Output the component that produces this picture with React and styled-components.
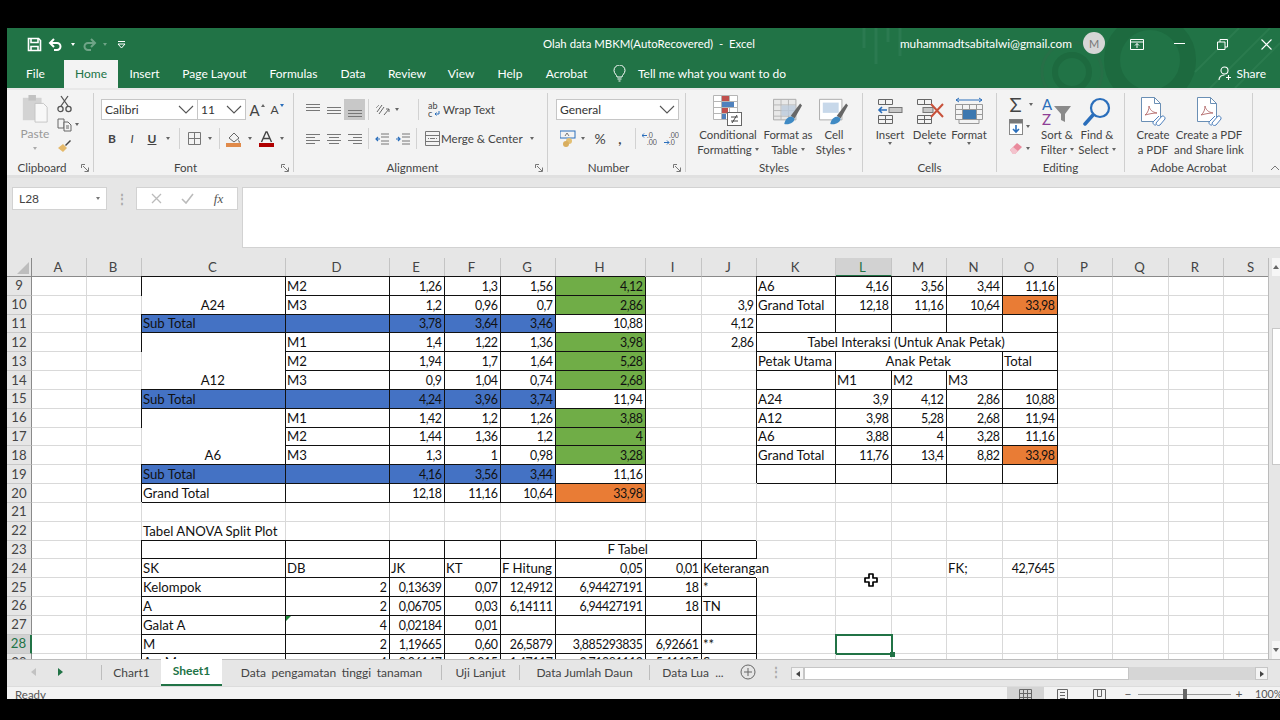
import React from 'react';
import styled, { createGlobalStyle } from 'styled-components';

const GREEN = '#217346';
const UI = 'Lato, "Open Sans", sans-serif';
const SHEET = 'Lato, "Liberation Sans", sans-serif';

const Global = createGlobalStyle`
  html, body { margin: 0; padding: 0; background: #000; overflow: hidden; }
  * { box-sizing: border-box; }
`;

const Frame = styled.div`
  width: 1280px;
  height: 720px;
  padding: 28px 0 21px 7px;
  background: #000;
`;
const Win = styled.div`
  height: 671px;
  display: flex;
  flex-direction: column;
  overflow: hidden;
  font-family: ${UI};
  color: #444;
  background: #e6e6e6;
`;

/* title + tabs */
const Head = styled.div`
  position: relative;
  height: 60px;
  flex: none;
  background: ${GREEN};
  color: #fff;
  overflow: hidden;
`;
const HeadArt = styled.svg`
  position: absolute;
  right: 0;
  top: 0;
`;
const TitleBar = styled.div`
  position: relative;
  height: 32px;
  display: flex;
  align-items: center;
`;
const Qat = styled.div`
  width: 536px;
  flex: none;
  display: flex;
  align-items: center;
  padding-left: 18px;
`;
const QatBtn = styled.span`
  width: ${p => p.$w}px;
  display: flex;
  justify-content: center;
  align-items: center;
  opacity: ${p => (p.$dim ? 0.35 : 1)};
`;
const DocTitle = styled.div`
  flex: 1;
  font-size: 11.4px;
  margin-top: -2px;
  white-space: pre;
`;
const Email = styled.div`
  font-size: 11.8px;
  margin-top: -2px;
  white-space: nowrap;
`;
const Avatar = styled.div`
  width: 22px;
  height: 22px;
  margin: -2px 10px 0 11px;
  border-radius: 50%;
  background: #d6d6d6;
  color: #777;
  font-size: 11px;
  display: flex;
  align-items: center;
  justify-content: center;
`;
const WinBtn = styled.div`
  width: ${p => p.$w || 43}px;
  height: 32px;
  display: flex;
  align-items: center;
  justify-content: center;
  padding-left: ${p => p.$pl || 0}px;
`;
const TabRow = styled.div`
  position: relative;
  height: 28px;
  display: flex;
  align-items: stretch;
`;
const RibbonTab = styled.div`
  width: ${p => p.$w}px;
  display: flex;
  align-items: center;
  justify-content: center;
  font-size: 12px;
  padding-bottom: 1px;
  white-space: nowrap;
  color: ${p => (p.$on ? GREEN : '#fff')};
  background: ${p => (p.$on ? '#f3f3f3' : 'transparent')};
`;
const TellMe = styled.div`
  display: flex;
  align-items: center;
  font-size: 12px;
  gap: 12px;
  margin-left: 15px;
  padding-bottom: 1px;
  white-space: nowrap;
`;
const Share = styled.div`
  margin-left: auto;
  padding: 0 14px 1px 0;
  display: flex;
  align-items: center;
  gap: 4px;
  font-size: 12px;
`;

/* ribbon */
const Ribbon = styled.div`
  height: 87px;
  flex: none;
  display: flex;
  background: #f3f3f3;
  border-top: 2px solid #e8e8e8;
`;
const Group = styled.div`
  width: ${p => p.$w}px;
  flex: none;
  margin: 3px 0 3px;
  display: flex;
  flex-direction: column;
  border-right: 1px solid #cfcfcf;
`;
const GroupBody = styled.div`
  flex: 1;
  display: flex;
  padding-left: ${p => p.$pl || 0}px;
  min-height: 0;
`;
const GroupFoot = styled.div`
  height: 13px;
  margin-bottom: -2px;
  display: flex;
  align-items: center;
`;
const GroupLabel = styled.div`
  flex: 1;
  text-align: center;
  font-size: 11.6px;
  line-height: 13px;
  color: #444;
`;
const Launcher = styled.svg`
  width: 8px;
  height: 8px;
  margin: 0 4px;
  flex: none;
`;
const PasteStack = styled.div`
  display: flex;
  flex-direction: column;
  align-items: center;
  width: 50px;
  margin-left: 3px;
  flex: none;
`;
const ClipTools = styled.div`
  display: flex;
  flex-direction: column;
  align-items: flex-start;
  margin-left: -3px;
  flex: none;
`;
const EditTools = styled.div`
  display: flex;
  flex-direction: column;
  align-items: center;
  width: 36px;
  flex: none;
`;
const PasteText = styled.div`
  font-size: 12px;
  color: #999;
  line-height: 14px;
  margin-top: 2px;
`;
const MiniIcon = styled.div`
  height: ${p => p.$h || 21}px;
  display: flex;
  align-items: center;
  gap: 3px;
  justify-content: center;
`;
const Rows = styled.div`
  display: flex;
  flex-direction: column;
  padding-top: 6px;
`;
const ToolRow = styled.div`
  height: 21px;
  display: flex;
  align-items: center;
  margin-bottom: 8px;
`;
const SelectBox = styled.div`
  width: ${p => p.$w}px;
  height: 21px;
  flex: none;
  background: #fff;
  border: 1px solid #c6c6c6;
  margin-left: -1px;
  display: flex;
  align-items: center;
  justify-content: space-between;
  padding: 0 3px 0 3px;
  font-size: 12px;
  color: #333;
`;
const Btn = styled.div`
  width: ${p => p.$w || 21}px;
  height: ${p => p.$h || 21}px;
  flex: none;
  display: flex;
  align-items: center;
  justify-content: center;
  margin-left: ${p => p.$ml || 0}px;
  background: ${p => (p.$on ? '#c8c8c8' : 'transparent')};
  font-size: ${p => p.$fs || 12}px;
  font-weight: ${p => (p.$bold ? 700 : 400)};
  font-style: ${p => (p.$it ? 'italic' : 'normal')};
  text-decoration: ${p => (p.$un ? 'underline' : 'none')};
  color: #444;
`;
const Caret = styled.i`
  width: 0;
  height: 0;
  display: inline-block;
  border-left: 2.5px solid transparent;
  border-right: 2.5px solid transparent;
  border-top: 3px solid ${p => p.$c || '#666'};
`;
const SizeMark = styled.i`
  width: 0;
  height: 0;
  margin: -8px 0 0 1px;
  border-left: 2px solid transparent;
  border-right: 2px solid transparent;
  ${p => (p.$up ? 'border-bottom: 3px solid #666;' : 'border-top: 3px solid #2a6ebb;')}
`;
const Sep = styled.div`
  width: 1px;
  height: 21px;
  flex: none;
  background: #d2d2d2;
  margin-left: ${p => p.$l}px;
  margin-right: ${p => p.$r}px;
`;
const ToolText = styled.div`
  font-size: 11.6px;
  white-space: nowrap;
  color: #444;
  width: ${p => (p.$w ? `${p.$w}px` : 'auto')};
`;
const Large = styled.div`
  width: ${p => p.$w}px;
  flex: none;
  display: flex;
  flex-direction: column;
  align-items: center;
  padding-top: 2px;
`;
const LargeIcon = styled.div`
  height: 32px;
  display: flex;
  align-items: center;
  justify-content: center;
`;
const LargeLine = styled.div`
  font-size: 11.4px;
  line-height: 15px;
  white-space: nowrap;
  color: #444;
  display: flex;
  align-items: center;
  gap: 3px;
`;
const Collapse = styled.svg`
  align-self: flex-end;
  margin: 0 0 4px 17px;
  flex: none;
`;

/* formula bar */
const FormulaBar = styled.div`
  height: 83px;
  flex: none;
  display: flex;
  align-items: flex-start;
  padding: 9px 0 0 5px;
  background: #e6e6e6;
  border-top: 3px solid #e0e0e0;
`;
const NameBox = styled.div`
  width: 95px;
  height: 23px;
  background: #fff;
  border: 1px solid #d2d2d2;
  display: flex;
  align-items: center;
  justify-content: space-between;
  padding: 0 6px 0 6px;
  font-size: 12px;
  color: #444;
`;
const Grip = styled.div`
  width: ${p => p.$w}px;
  height: 23px;
  flex: none;
  display: flex;
  align-items: center;
  justify-content: center;
  color: #aaa;
  font-size: 12px;
  font-weight: 700;
`;
const FxBox = styled.div`
  width: 102px;
  height: 23px;
  background: #fff;
  border: 1px solid #d2d2d2;
  display: flex;
  align-items: center;
  justify-content: space-around;
  padding: 0 4px;
`;
const FxMark = styled.span`
  font-family: "Liberation Serif", serif;
  font-style: italic;
  font-size: 13px;
  color: #555;
`;
const Input = styled.div`
  flex: 1;
  height: 61px;
  margin-left: 4px;
  background: #fff;
  border: 1px solid #d2d2d2;
  border-right: 0;
`;

/* sheet */
const SheetArea = styled.div`
  height: 401px;
  flex: none;
  display: flex;
  background: #fff;
`;
const Grid = styled.div`
  flex: 1;
  height: 401px;
  overflow: hidden;
  display: grid;
  grid-template-columns: 25px ${p => p.$cols};
  grid-template-rows: 19px repeat(21, 18.84px);
  font-family: ${SHEET};
  font-size: 13.2px;
  color: #111;
`;
const Corner = styled.div`
  background: #e6e6e6;
  border-bottom: 1px solid #8a8a8a;
  border-right: 1px solid #8a8a8a;
  display: flex;
  align-items: flex-end;
  justify-content: flex-end;
  padding: 0 2px 2px 0;
`;
const CornerMark = styled.i`
  width: 0;
  height: 0;
  border-left: 12px solid transparent;
  border-bottom: 12px solid #bdbdbd;
`;
const ColHead = styled.div`
  display: flex;
  align-items: center;
  justify-content: center;
  padding-right: 2px;
  background: ${p => (p.$on ? '#d2d2d2' : '#e6e6e6')};
  color: ${p => (p.$on ? GREEN : '#444')};
  border-right: 1px solid #c4c4c4;
  border-bottom: ${p => (p.$on ? `2px solid ${GREEN}` : '1px solid #8a8a8a')};
`;
const RowHead = styled.div`
  display: flex;
  align-items: center;
  justify-content: center;
  padding-bottom: 1px;
  background: ${p => (p.$on ? '#d2d2d2' : '#e6e6e6')};
  color: ${p => (p.$on ? GREEN : '#444')};
  border-right: ${p => (p.$on ? `2px solid ${GREEN}` : '1px solid #8a8a8a')};
  border-bottom: 1px solid #c8c8c8;
`;
const fills = { blue: '#4472c4', green: '#70ad47', orange: '#e97c35' };
const boxShadow = p => {
  if (p.$open) return 'box-shadow: -1px -1px 0 #111;';
  if (p.$box) return 'box-shadow: inset -1px -1px 0 #111, -1px -1px 0 #111;';
  return 'box-shadow: inset -1px -1px 0 #d9d9d9;';
};
const Cell = styled.div`
  position: relative;
  grid-column: span ${p => p.$cs || 1};
  grid-row: span ${p => p.$rs || 1};
  display: flex;
  align-items: flex-end;
  justify-content: ${p => p.$al};
  padding: 0 3.5px 1px 1px;
  line-height: 17px;
  white-space: nowrap;
  font-size: ${p => (p.$num ? '12.4px' : 'inherit')};
  letter-spacing: ${p => (p.$num ? '-0.45px' : 'normal')};
  background: ${p => (p.$fill ? fills[p.$fill] : 'transparent')};
  ${boxShadow}
  ${p => p.$flag && `
    &::before {
      content: '';
      position: absolute;
      left: 0;
      top: 0;
      border-top: 5px solid #1f8a3a;
      border-right: 5px solid transparent;
    }
  `}
  ${p => p.$sel && `
    &::after {
      content: '';
      position: absolute;
      inset: -1px;
      border: 2px solid ${GREEN};
    }
    &::before {
      content: '';
      position: absolute;
      right: -3px;
      bottom: -3px;
      width: 5px;
      height: 5px;
      background: ${GREEN};
      z-index: 1;
    }
  `}
`;
const Pointer = styled.svg`
  position: absolute;
  left: 28px;
  top: -5px;
`;
const VScroll = styled.div`
  width: 12px;
  flex: none;
  background: #e6e6e6;
  border-left: 1px solid #bbb;
  display: flex;
  flex-direction: column;
  padding-left: 3px;
`;
const VArrow = styled.div`
  height: 18px;
  flex: none;
  background: #f6f6f6;
  margin-bottom: ${p => p.$mb || 0}px;
  margin-top: ${p => p.$mt || 0}px;
  display: flex;
  align-items: center;
  justify-content: center;
`;
const VThumb = styled.div`
  height: 137px;
  background: #fff;
  border: 1px solid #c8c8c8;
  border-right: 0;
  flex: none;
`;
const UpMark = styled.i`
  width: 0;
  height: 0;
  border-left: 3px solid transparent;
  border-right: 3px solid transparent;
  border-${p => (p.$up ? 'bottom' : 'top')}: 4px solid #666;
`;

/* sheet tabs */
const TabBar = styled.div`
  height: 27px;
  flex: none;
  display: flex;
  align-items: stretch;
  background: #e6e6e6;
  border-top: 1px solid #bcbcbc;
  font-size: 12px;
`;
const TabNav = styled.div`
  width: 94px;
  flex: none;
  display: flex;
  align-items: center;
  padding: 0 0 2px 24px;
  gap: 22px;
`;
const NavArrow = styled.i`
  width: 0;
  height: 0;
  border-top: 4px solid transparent;
  border-bottom: 4px solid transparent;
  border-${p => (p.$left ? 'right' : 'left')}: 5px solid ${p => (p.$dim ? '#c2c2c2' : '#217346')};
`;
const SheetTab = styled.div`
  width: ${p => p.$w}px;
  flex: none;
  display: flex;
  align-items: center;
  justify-content: center;
  padding-bottom: 2px;
  white-space: nowrap;
  word-spacing: ${p => p.$ws || 0}px;
  margin-top: ${p => (p.$on ? -1 : 0)}px;
  background: ${p => (p.$on ? '#fff' : 'transparent')};
  color: ${p => (p.$on ? GREEN : '#444')};
  font-weight: ${p => (p.$on ? 700 : 400)};
  border-bottom: ${p => (p.$on ? `2px solid ${GREEN}` : '0')};
`;
const TabLine = styled.div`
  width: 1px;
  flex: none;
  margin: 5px 0 6px;
  background: #bdbdbd;
`;
const AddSheet = styled.div`
  width: 24px;
  flex: none;
  display: flex;
  align-items: center;
  justify-content: center;
  padding-bottom: 2px;
`;
const HScroll = styled.div`
  width: 477px;
  height: 13px;
  margin: 7px 0 0;
  flex: none;
  display: flex;
  align-items: stretch;
  background: #d6d6d6;
`;
const HArrow = styled.div`
  width: 13px;
  flex: none;
  background: #f4f4f4;
  border: 1px solid #c6c6c6;
  display: flex;
  align-items: center;
  justify-content: center;
`;
const HThumb = styled.div`
  width: 325px;
  flex: none;
  background: #fff;
  border: 1px solid #c6c6c6;
`;
const HRest = styled.div`
  flex: 1;
`;
const HMark = styled.i`
  width: 0;
  height: 0;
  border-top: 3.5px solid transparent;
  border-bottom: 3.5px solid transparent;
  border-${p => (p.$left ? 'right' : 'left')}: 4px solid #444;
`;

/* status */
const Status = styled.div`
  flex: 1;
  min-height: 0;
  overflow: hidden;
  background: #f3f3f3;
  border-top: 1px solid #dcdcdc;
  display: flex;
  align-items: flex-start;
  font-size: 11.5px;
  color: #555;
`;
const Ready = styled.div`
  margin: 1px auto 0 8px;
  line-height: 14px;
`;
const ViewBtn = styled.div`
  width: 37px;
  height: 14px;
  flex: none;
  padding-top: 2px;
  display: flex;
  justify-content: center;
  background: ${p => (p.$on ? '#d4d4d4' : 'transparent')};
`;
const Zoomer = styled.div`
  width: ${p => p.$w}px;
  flex: none;
  text-align: center;
  line-height: 14px;
  font-size: ${p => p.$fs || 12}px;
  padding-left: ${p => p.$pl || 0}px;
  white-space: nowrap;
`;
const Slider = styled.div`
  position: relative;
  width: 93px;
  height: 14px;
  flex: none;
  &::before {
    content: '';
    position: absolute;
    left: 0;
    right: 0;
    top: 7px;
    height: 1px;
    background: #999;
  }
`;
const SliderThumb = styled.div`
  position: absolute;
  left: 45px;
  top: 2px;
  width: 4px;
  height: 12px;
  background: #666;
`;

/* ---------- drawings ---------- */
const SaveIcon = () => (
  <svg width="15" height="15" viewBox="0 0 15 15" fill="none" stroke="#fff" strokeWidth="1.6">
    <path d="M1.500 1.500h10l2 2v10h-12z" />
    <path d="M4 1.500v4h7v-4M4 13.500v-4h7v4" />
  </svg>
);
const UndoIcon = ({ flip }) => (
  <svg width="15" height="13" viewBox="0 0 15 13" fill="none" stroke="#fff" strokeWidth="2" style={flip ? { transform: 'scaleX(-1)' } : undefined}>
    <path d="M6 1L2 5l4 4" />
    <path d="M2 5h7a3.500 3.500 0 0 1 0 7H6" />
  </svg>
);
const CustomizeIcon = () => (
  <svg width="9" height="9" viewBox="0 0 9 9" fill="none" stroke="#fff">
    <path d="M1 1.500h7" />
    <path d="M1 4l3.500 4L8 4z" />
  </svg>
);
const ArtPaths = () => (
  <>
    <circle cx="300" cy="32" r="38" fill="none" stroke="#1d6a3f" strokeWidth="16" />
    <circle cx="222" cy="44" r="17" fill="none" stroke="#1d6a3f" strokeWidth="6" />
    <circle cx="222" cy="44" r="30" fill="none" stroke="#276f47" strokeWidth="3" />
    <path d="M14 0v20M26 0v36M38 0v14M50 0v28" stroke="#2b7a50" strokeWidth="3" />
    <path d="M360 60l60-60M385 60l45-45M345 44l44-44" stroke="#2a7b4e" strokeWidth="2" />
  </>
);
const BulbIcon = () => (
  <svg width="13" height="17" viewBox="0 0 13 17" fill="none" stroke="#fff" strokeWidth="1">
    <path d="M4 12c0-2-3-3.500-3-6.500a5.500 5.500 0 0 1 11 0C12 8.500 9 10 9 12z" />
    <path d="M4.500 14h4M5.500 16h2" />
  </svg>
);
const ShareIcon = () => (
  <svg width="14" height="15" viewBox="0 0 14 15" fill="none" stroke="#fff" strokeWidth="1.100">
    <circle cx="6.500" cy="4.500" r="3.500" />
    <path d="M1 14c0-3 2-5 5.500-5M10.500 9v5M8 11.500h5" />
  </svg>
);
const PasteIcon = () => (
  <svg width="28" height="30" viewBox="0 0 30 32">
    <rect x="2" y="4" width="20" height="24" fill="#d3d3d3" />
    <rect x="8" y="1" width="8" height="6" fill="#c2c2c2" />
    <path d="M15 10h9l4 4v16H15z" fill="#f8f8f8" stroke="#c4c4c4" />
  </svg>
);
const ScissorsIcon = () => (
  <svg width="15" height="18" viewBox="0 0 15 18" fill="none" stroke="#555" strokeWidth="1.300">
    <path d="M4 11L11 1M11 11L4 1" />
    <circle cx="3.500" cy="14" r="2.600" />
    <circle cx="11.500" cy="14" r="2.600" />
  </svg>
);
const CopyIcon = () => (
  <svg width="15" height="14" viewBox="0 0 15 14" fill="none" stroke="#666">
    <path d="M1 1h6v9H1z" />
    <path d="M7 4h4l3 3v6H7z" fill="#f3f3f3" />
    <path d="M9 8h3M9 10h3" />
  </svg>
);
const BrushIcon = () => (
  <svg width="15" height="14" viewBox="0 0 15 14">
    <path d="M1 9l5-4 4 4-4 4z" fill="#e5b96a" />
    <path d="M8 6l5-5 1 1-5 5z" fill="#444" />
  </svg>
);
const Chevron = () => (
  <svg width="16" height="9" viewBox="0 0 16 9" fill="none" stroke="#555" strokeWidth="1.100">
    <path d="M1 1l7 7 7-7" />
  </svg>
);
const BorderIcon = () => (
  <svg width="13" height="13" viewBox="0 0 13 13" fill="none" stroke="#777">
    <path d="M.5.500h12v12H.5zM6.500.500v12M.5 6.500h12" />
  </svg>
);
const FillIcon = () => (
  <svg width="16" height="16" viewBox="0 0 16 16">
    <path d="M3 7l5-5 5 5-5 4z" fill="none" stroke="#666" />
    <path d="M12 8l2 3-1 1z" fill="#555" />
    <rect x="0" y="12" width="15" height="4" fill="#e08a4a" />
  </svg>
);
const FontColorIcon = () => (
  <svg width="15" height="16" viewBox="0 0 15 16">
    <path d="M2.500 11L7 1h1l4.500 10M4.500 7.500h6" fill="none" stroke="#444" strokeWidth="1.400" />
    <rect x="0" y="12" width="15" height="4" fill="#b00000" />
  </svg>
);
const Lines = ({ ys, widths }) => (
  <svg width="14" height="16" viewBox="0 0 14 16" fill="none" stroke="#777">
    {ys.map((y, i) => (
      <path key={i} d={`M${widths[i][0]} ${y}.5H${widths[i][1]}`} />
    ))}
  </svg>
);
const full = [0, 14];
const OrientIcon = () => (
  <svg width="15" height="14" viewBox="0 0 15 14" fill="none" stroke="#666">
    <path d="M2 9l5-7M4 11l5-7M9 12l5-6-3 0M14 6v3" />
    <path d="M1 5l3-3" stroke="#999" />
  </svg>
);
const WrapIcon = () => (
  <svg width="14" height="16" viewBox="0 0 14 16">
    <text x="0" y="7" fontSize="9" fill="#444" fontFamily={UI}>ab</text>
    <text x="0" y="15" fontSize="9" fill="#444" fontFamily={UI}>c</text>
    <path d="M11 9v3H7M8.500 10.500L7 12l1.500 1.500" fill="none" stroke="#2a6ebb" />
  </svg>
);
const IndentIcon = ({ dir }) => (
  <svg width="14" height="12" viewBox="0 0 14 12" fill="none">
    <path d="M6 1h8M6 4h8M6 8h8M6 11h8" stroke="#777" />
    <path d={dir === 'l' ? 'M5 6H1M3 4L1 6l2 2' : 'M0 6h4M2 4l2 2-2 2'} stroke="#2a6ebb" strokeWidth="1.200" />
  </svg>
);
const MergeIcon = () => (
  <svg width="15" height="15" viewBox="0 0 15 15" fill="none" stroke="#777">
    <path d="M.5.500h14v14H.5zM.5 4.500h14M.5 10.500h14M5 7.500h5M3 7.500h1M11 7.500h1" />
  </svg>
);
const CurrencyIcon = () => (
  <svg width="17" height="17" viewBox="0 0 17 17">
    <rect x="0" y="1" width="15" height="7" fill="none" stroke="#2a6ebb" />
    <path d="M5 6l2-3 2 3" fill="none" stroke="#777" />
    <circle cx="9" cy="11" r="3" fill="#e3bf72" />
    <circle cx="6" cy="14" r="3" fill="#d9ae5e" />
  </svg>
);
const DecimalIcon = ({ more }) => (
  <svg width="15" height="14" viewBox="0 0 15 14">
    <text x="5" y="6" fontSize="7" fill="#555" fontFamily={UI}>{more ? '.0' : '.00'}</text>
    <text x="5" y="13" fontSize="7" fill="#555" fontFamily={UI}>{more ? '.00' : '.0'}</text>
    <path d={more ? 'M5 3.500H0M2 1.500L0 3.500l2 2' : 'M0 10.500h5M3 8.500l2 2-2 2'} fill="none" stroke="#2a6ebb" />
  </svg>
);
const CondIcon = () => (
  <svg width="30" height="32" viewBox="0 0 30 32">
    <path d="M.5.500h24v24H.5zM8.500.500v24M16.500.500v24M.5 6.500h24M.5 12.500h24M.5 18.500h24" fill="#fff" stroke="#b5b5b5" />
    <rect x="9" y="1" width="7" height="5" fill="#c0504d" />
    <rect x="9" y="7" width="12" height="5" fill="#4f81bd" />
    <rect x="9" y="13" width="6" height="5" fill="#c0504d" />
    <rect x="9" y="19" width="4" height="5" fill="#4f81bd" />
    <rect x="14.500" y="17.500" width="14" height="13" fill="#fff" stroke="#666" />
    <path d="M18 22h7M18 26h7M24 20l-5 8" stroke="#444" fill="none" />
  </svg>
);
const TableBrush = ({ cell }) => (
  <svg width="30" height="28" viewBox="0 0 32 30">
    <path d="M.5 2.500h24v22H.5z" fill={cell ? '#fff' : '#e8e8e8'} stroke="#a8a8a8" />
    {cell
      ? <rect x="4" y="6" width="17" height="11" fill="#c7d8ea" />
      : <path d="M8.500 2.500v22M16.500 2.500v22M.5 8.500h24M.5 14.500h24M.5 20.500h24" stroke="#b5b5b5" fill="none" />}
    {!cell && <rect x="9" y="9" width="15" height="11" fill="#bccbdc" opacity=".8" />}
    <path d="M19 20l10-13 2 2-8 14z" fill="#666" />
    <path d="M12 29c1-5 4-8 8-8l3 2c0 4-5 7-11 6z" fill="#3f8ac4" />
  </svg>
);
const InsertIcon = () => (
  <svg width="26" height="26" viewBox="0 0 26 26" fill="none">
    <path d="M1.500 1.500h14v5h-14zM8.500 1.500v5M1.500 17.500h14v8h-14zM8.500 17.500v8M1.500 21.500h14" stroke="#666" />
    <rect x="12" y="9.500" width="13" height="5" fill="#c7c7c7" stroke="#777" />
    <path d="M10 12H2M5 9l-3 3 3 3" stroke="#2a6ebb" strokeWidth="1.600" />
  </svg>
);
const DeleteIcon = () => (
  <svg width="28" height="26" viewBox="0 0 28 26" fill="none">
    <path d="M1.500 1.500h14v5h-14zM8.500 1.500v5M1.500 17.500h14v8h-14zM8.500 17.500v8M1.500 21.500h14" stroke="#666" />
    <rect x="7" y="9.500" width="10" height="5" fill="#c7c7c7" stroke="#777" />
    <path d="M15 6l12 13M27 6L15 19" stroke="#c8513a" strokeWidth="2" />
  </svg>
);
const FormatIcon = () => (
  <svg width="28" height="28" viewBox="0 0 28 28" fill="none">
    <path d="M1 3h26M1 3l3-2M1 3l3 2M27 3l-3-2M27 3l-3 2" stroke="#2a6ebb" />
    <path d="M.5 7.500h27v15H.5zM7.500 7.500v15M14.500 7.500v15M21.500 7.500v15M.5 12.500h27M.5 17.500h27" stroke="#999" />
    <path d="M4 22.500v4h20v-4" stroke="#999" />
    <rect x="8" y="13" width="13" height="9" fill="#3d78b0" />
  </svg>
);
const FillDown = () => (
  <svg width="14" height="16" viewBox="0 0 14 16">
    <rect x=".5" y=".5" width="13" height="15" fill="#fff" stroke="#888" />
    <rect x=".5" y=".5" width="13" height="4" fill="#777" />
    <path d="M7 6v7M4 10l3 3 3-3" fill="none" stroke="#2a6ebb" strokeWidth="1.600" />
  </svg>
);
const EraserIcon = () => (
  <svg width="14" height="13" viewBox="0 0 14 13">
    <path d="M1 8l7-7 5 4-7 7H4z" fill="#e98a9c" />
    <path d="M1 8l3-3 5 4-3 3H4z" fill="#f3c3cd" />
  </svg>
);
const SortIcon = () => (
  <svg width="30" height="31" viewBox="0 0 30 31">
    <text x="0" y="14" fontSize="15" fontFamily={UI} fill="#2a6ebb">A</text>
    <text x="0" y="29" fontSize="15" fontFamily={UI} fill="#8e3f96">Z</text>
    <path d="M12 10h17l-6 8v8l-4-2v-6z" fill="#8a8a8a" />
  </svg>
);
const LensIcon = () => (
  <svg width="28" height="29" viewBox="0 0 28 29" fill="none">
    <circle cx="17" cy="11" r="9" stroke="#2a6ebb" strokeWidth="2.200" />
    <path d="M10 18L2 27" stroke="#2a6ebb" strokeWidth="3.500" strokeLinecap="round" />
  </svg>
);
const PdfLink = () => (
  <svg width="26" height="30" viewBox="0 0 26 30" fill="none">
    <path d="M1.500 1.500h13l6 6v18h-19z" fill="#fff" stroke="#6a8fb5" />
    <path d="M14.500 1.500v6h6" stroke="#6a8fb5" />
    <path d="M5 19c3-2 4-6 4-9 1 4 3 6 8 7-4 0-8 1-12 2z" stroke="#b36a6a" strokeWidth=".9" />
    <path d="M16 27l6-7a2.500 2.500 0 0 1 3 3l-5 6a2.500 2.500 0 0 1-4-2M19 20l-6 6a2.500 2.500 0 0 0 3 3" stroke="#4f81bd" fill="#fff" />
  </svg>
);

/* ---------- data ---------- */
const colNames = 'ABCDEFGHIJKLMNOPQRS'.split('');
const colWidths = [55, 55, 144, 104, 55, 56, 55, 90, 56, 55, 79, 56, 55, 56, 55, 55, 56, 55, 56];

const rows = {
  9: { C: { t: 'A24', rs: 2, al: 'center' }, D: 'M2', E: '1,26', F: '1,3', G: '1,56', H: '4,12', K: 'A6', L: '4,16', M: '3,56', N: '3,44', O: '11,16' },
  10: { D: 'M3', E: '1,2', F: '0,96', G: '0,7', H: '2,86', J: '3,9', K: 'Grand Total', L: '12,18', M: '11,16', N: '10,64', O: '33,98' },
  11: { C: 'Sub Total', E: '3,78', F: '3,64', G: '3,46', H: '10,88', J: '4,12' },
  12: { C: { t: 'A12', rs: 3, al: 'center' }, D: 'M1', E: '1,4', F: '1,22', G: '1,36', H: '3,98', J: '2,86', K: { t: 'Tabel Interaksi (Untuk Anak Petak)', cs: 5, al: 'center' } },
  13: { D: 'M2', E: '1,94', F: '1,7', G: '1,64', H: '5,28', K: 'Petak Utama', L: { t: 'Anak Petak', cs: 3, al: 'center' }, O: 'Total' },
  14: { D: 'M3', E: '0,9', F: '1,04', G: '0,74', H: '2,68', L: 'M1', M: 'M2', N: 'M3' },
  15: { C: 'Sub Total', E: '4,24', F: '3,96', G: '3,74', H: '11,94', K: 'A24', L: '3,9', M: '4,12', N: '2,86', O: '10,88' },
  16: { C: { t: 'A6', rs: 3, al: 'center' }, D: 'M1', E: '1,42', F: '1,2', G: '1,26', H: '3,88', K: 'A12', L: '3,98', M: '5,28', N: '2,68', O: '11,94' },
  17: { D: 'M2', E: '1,44', F: '1,36', G: '1,2', H: '4', K: 'A6', L: '3,88', M: '4', N: '3,28', O: '11,16' },
  18: { D: 'M3', E: '1,3', F: '1', G: '0,98', H: '3,28', K: 'Grand Total', L: '11,76', M: '13,4', N: '8,82', O: '33,98' },
  19: { C: 'Sub Total', E: '4,16', F: '3,56', G: '3,44', H: '11,16' },
  20: { C: 'Grand Total', E: '12,18', F: '11,16', G: '10,64', H: '33,98' },
  21: {},
  22: { C: 'Tabel ANOVA Split Plot' },
  23: { H: { t: 'F Tabel', cs: 2, al: 'center' } },
  24: { C: 'SK', D: 'DB', E: 'JK', F: 'KT', G: 'F Hitung', H: '0,05', I: '0,01', J: 'Keterangan', N: 'FK;', O: '42,7645' },
  25: { C: 'Kelompok', D: '2', E: '0,13639', F: '0,07', G: '12,4912', H: '6,94427191', I: '18', J: '*' },
  26: { C: 'A', D: '2', E: '0,06705', F: '0,03', G: '6,14111', H: '6,94427191', I: '18', J: 'TN' },
  27: { C: 'Galat A', D: '4', E: '0,02184', F: '0,01' },
  28: { C: 'M', D: '2', E: '1,19665', F: '0,60', G: '26,5879', H: '3,885293835', I: '6,92661', J: '**' },
  29: { C: 'A x M', D: '4', E: '0,06147', F: '0,015', G: '1,47117', H: '2,71981112', I: '5,41195', J: 'S' },
};

const inBox = (c, r) => {
  if (r >= 9 && r <= 20 && c >= 2 && c <= 7) return true;
  if (r >= 9 && r <= 19 && c >= 10 && c <= 14) return true;
  if (r >= 23 && r <= 29 && c >= 2 && c <= 9) return true;
  return false;
};
const fillOf = (c, r) => {
  if ([11, 15, 19].includes(r) && c >= 2 && c <= 6) return 'blue';
  if (c === 7 && [9, 10, 12, 13, 14, 16, 17, 18].includes(r)) return 'green';
  if ((c === 7 && r === 20) || (c === 14 && (r === 10 || r === 18))) return 'orange';
  return undefined;
};

const renderCells = () => {
  const out = [];
  const covered = {};
  out.push(<Corner key="corner"><CornerMark /></Corner>);
  colNames.forEach(n => out.push(<ColHead key={n} $on={n === 'L'}>{n}</ColHead>));
  Object.keys(rows).map(Number).forEach(r => {
    out.push(<RowHead key={`r${r}`} $on={r === 28}>{r}</RowHead>);
    colNames.forEach((n, c) => {
      if (covered[`${n}${r}`]) return;
      const raw = rows[r][n];
      const spec = typeof raw === 'string' ? { t: raw } : raw || {};
      const cs = spec.cs || 1;
      const rs = spec.rs || 1;
      for (let i = 0; i < cs; i++) for (let j = 0; j < rs; j++) covered[`${colNames[c + i]}${r + j}`] = true;
      const numeric = spec.t && /^[\d,]+$/.test(spec.t);
      const al = spec.al || (numeric ? 'flex-end' : 'flex-start');
      out.push(
        <Cell
          key={`${n}${r}`}
          $cs={cs}
          $rs={rs}
          $al={al}
          $num={numeric}
          $box={inBox(c, r)}
          $open={n === 'J' && r === 24}
          $fill={fillOf(c, r)}
          $flag={n === 'D' && r === 27}
          $sel={n === 'L' && r === 28}
        >
          {spec.t}
          {n === 'L' && r === 25 && (
            <Pointer width="14" height="14" viewBox="0 0 14 14">
              <path d="M5 1h4v4h4v4H9v4H5V9H1V5h4z" fill="#fff" stroke="#000" strokeWidth="1.700" strokeLinejoin="round" />
            </Pointer>
          )}
        </Cell>
      );
    });
  });
  return out;
};

const tabs = [
  ['File', 57], ['Home', 54, true], ['Insert', 53], ['Page Layout', 87], ['Formulas', 71],
  ['Data', 48], ['Review', 60], ['View', 48], ['Help', 50], ['Acrobat', 63],
];

const GroupOf = ({ w, pl, label, launcher, children }) => (
  <Group $w={w}>
    <GroupBody $pl={pl}>{children}</GroupBody>
    <GroupFoot>
      <GroupLabel>{label}</GroupLabel>
      {launcher && (
        <Launcher viewBox="0 0 8 8" fill="none" stroke="#777">
          <path d="M.5 4V.5H4M2 2l5 5M7.500 3.500v4h-4" />
        </Launcher>
      )}
    </GroupFoot>
  </Group>
);

const LargeBtn = ({ w, icon, lines, caretLine }) => (
  <Large $w={w}>
    <LargeIcon>{icon}</LargeIcon>
    {lines.map((l, i) => (
      <LargeLine key={i}>
        {l}
        {i === lines.length - 1 && caretLine && <Caret />}
      </LargeLine>
    ))}
  </Large>
);

export default function App() {
  return (
    <Frame>
      <Global />
      <Win>
        <Head>
          <HeadArt width="430" height="60" viewBox="0 0 430 60"><ArtPaths /></HeadArt>
          <TitleBar>
            <Qat>
              <QatBtn $w={18}><SaveIcon /></QatBtn>
              <QatBtn $w={24}><UndoIcon /></QatBtn>
              <QatBtn $w={12}><Caret $c="#fff" /></QatBtn>
              <QatBtn $w={20} $dim><UndoIcon flip /></QatBtn>
              <QatBtn $w={12} $dim><Caret $c="#fff" /></QatBtn>
              <QatBtn $w={20}><CustomizeIcon /></QatBtn>
            </Qat>
            <DocTitle>Olah data MBKM(AutoRecovered)  -  Excel</DocTitle>
            <Email>muhammadtsabitalwi@gmail.com</Email>
            <Avatar>M</Avatar>
            <WinBtn>
              <svg width="14" height="11" viewBox="0 0 14 11" fill="none" stroke="#fff"><path d="M.5.500h13v10H.5zM.5 3h13M7 9V4.500M5 6.500l2-2 2 2" /></svg>
            </WinBtn>
            <WinBtn>
              <svg width="11" height="2" viewBox="0 0 11 2"><rect width="11" height="1" fill="#fff" /></svg>
            </WinBtn>
            <WinBtn>
              <svg width="11" height="11" viewBox="0 0 11 11" fill="none" stroke="#fff"><path d="M.5 3h7.500v7.500H.5zM3 3V.5h7.500V8H8" /></svg>
            </WinBtn>
            <WinBtn $w={36} $pl={8}>
              <svg width="11" height="11" viewBox="0 0 11 11" fill="none" stroke="#fff" strokeWidth="1.100"><path d="M.5.500l10 10M10.500.500l-10 10" /></svg>
            </WinBtn>
          </TitleBar>
          <TabRow>
            {tabs.map(([t, w, on]) => <RibbonTab key={t} $w={w} $on={on}>{t}</RibbonTab>)}
            <TellMe><BulbIcon />Tell me what you want to do</TellMe>
            <Share><ShareIcon />Share</Share>
          </TabRow>
        </Head>

        <Ribbon>
          <GroupOf w={87} label="Clipboard" launcher>
            <PasteStack>
              <LargeIcon><PasteIcon /></LargeIcon>
              <PasteText>Paste</PasteText>
              <MiniIcon $h={14}><Caret $c="#aaa" /></MiniIcon>
            </PasteStack>
            <ClipTools>
              <MiniIcon><ScissorsIcon /></MiniIcon>
              <MiniIcon><CopyIcon /><Caret /></MiniIcon>
              <MiniIcon><BrushIcon /></MiniIcon>
            </ClipTools>
          </GroupOf>

          <GroupOf w={200} pl={8} label="Font" launcher>
            <Rows>
              <ToolRow>
                <SelectBox $w={97}>Calibri<Chevron /></SelectBox>
                <SelectBox $w={49}>11<Chevron /></SelectBox>
                <Btn $w={22} $fs={15}>A<SizeMark $up /></Btn>
                <Btn $w={18} $fs={12}>A<SizeMark /></Btn>
              </ToolRow>
              <ToolRow>
                <Btn $w={20} $bold $fs={12}>B</Btn>
                <Btn $w={20} $it $fs={12}>I</Btn>
                <Btn $w={20} $un $bold $fs={12}>U</Btn>
                <Btn $w={12}><Caret /></Btn>
                <Sep $l={5} $r={4} />
                <Btn $w={20}><BorderIcon /></Btn>
                <Btn $w={12}><Caret /></Btn>
                <Sep $l={3} $r={2} />
                <Btn $w={24}><FillIcon /></Btn>
                <Btn $w={8}><Caret /></Btn>
                <Btn $w={24}><FontColorIcon /></Btn>
                <Btn $w={8}><Caret /></Btn>
              </ToolRow>
            </Rows>
          </GroupOf>

          <GroupOf w={254} pl={8} label="Alignment" launcher>
            <Rows>
              <ToolRow>
                <Btn><Lines ys={[2, 5, 8]} widths={[full, full, full]} /></Btn>
                <Btn><Lines ys={[5, 8, 11]} widths={[full, full, full]} /></Btn>
                <Btn $on><Lines ys={[8, 11, 14]} widths={[full, full, full]} /></Btn>
                <Sep $l={3} $r={2} />
                <Btn $w={22}><OrientIcon /></Btn>
                <Btn $w={8}><Caret /></Btn>
                <Sep $l={17} $r={7} />
                <Btn $w={17}><WrapIcon /></Btn>
                <ToolText>Wrap Text</ToolText>
              </ToolRow>
              <ToolRow>
                <Btn><Lines ys={[3, 6, 9, 12]} widths={[full, [0, 9], full, [0, 9]]} /></Btn>
                <Btn><Lines ys={[3, 6, 9, 12]} widths={[full, [2, 12], full, [2, 12]]} /></Btn>
                <Btn><Lines ys={[3, 6, 9, 12]} widths={[full, [5, 14], full, [5, 14]]} /></Btn>
                <Sep $l={3} $r={2} />
                <Btn><IndentIcon dir="l" /></Btn>
                <Btn><IndentIcon /></Btn>
                <Sep $l={3} $r={7} />
                <Btn $w={17}><MergeIcon /></Btn>
                <ToolText $w={89}>Merge &amp; Center</ToolText>
                <Caret />
              </ToolRow>
            </Rows>
          </GroupOf>

          <GroupOf w={138} pl={9} label="Number" launcher>
            <Rows>
              <ToolRow>
                <SelectBox $w={123}>General<Chevron /></SelectBox>
              </ToolRow>
              <ToolRow>
                <Btn $w={22}><CurrencyIcon /></Btn>
                <Btn $w={8}><Caret /></Btn>
                <Btn $w={26} $fs={14}>%</Btn>
                <Btn $w={14} $fs={14} $bold>,</Btn>
                <Sep $l={8} $r={6} />
                <Btn $w={15}><DecimalIcon more /></Btn>
                <Btn $w={15} $ml={7}><DecimalIcon /></Btn>
              </ToolRow>
            </Rows>
          </GroupOf>

          <GroupOf w={177} pl={8} label="Styles">
            <LargeBtn w={68} icon={<CondIcon />} lines={['Conditional', 'Formatting']} caretLine />
            <LargeBtn w={52} icon={<TableBrush />} lines={['Format as', 'Table']} caretLine />
            <LargeBtn w={40} icon={<TableBrush cell />} lines={['Cell', 'Styles']} caretLine />
          </GroupOf>

          <GroupOf w={134} pl={7} label="Cells">
            <LargeBtn w={40} icon={<InsertIcon />} lines={['Insert', <Caret key="c" />]} />
            <LargeBtn w={39} icon={<DeleteIcon />} lines={['Delete', <Caret key="c" />]} />
            <LargeBtn w={40} icon={<FormatIcon />} lines={['Format', <Caret key="c" />]} />
          </GroupOf>

          <GroupOf w={128} pl={4} label="Editing">
            <EditTools>
              <MiniIcon $h={22}><Btn $w={20} $fs={20}>Σ</Btn><Caret /></MiniIcon>
              <MiniIcon $h={23}><FillDown /><Caret /></MiniIcon>
              <MiniIcon $h={21}><EraserIcon /><Caret /></MiniIcon>
            </EditTools>
            <LargeBtn w={40} icon={<SortIcon />} lines={['Sort &', 'Filter']} caretLine />
            <LargeBtn w={40} icon={<LensIcon />} lines={['Find &', 'Select']} caretLine />
          </GroupOf>

          <GroupOf w={128} pl={8} label="Adobe Acrobat">
            <LargeBtn w={40} icon={<PdfLink />} lines={['Create', 'a PDF']} />
            <LargeBtn w={72} icon={<PdfLink />} lines={['Create a PDF', 'and Share link']} />
          </GroupOf>

          <Collapse width="10" height="6" viewBox="0 0 10 6" fill="none" stroke="#777"><path d="M1 5l4-4 4 4" /></Collapse>
        </Ribbon>

        <FormulaBar>
          <NameBox>L28<Caret $c="#777" /></NameBox>
          <Grip $w={29}>⋮</Grip>
          <FxBox>
            <svg width="11" height="11" viewBox="0 0 11 11" fill="none" stroke="#bbb" strokeWidth="1.300"><path d="M1 1l9 9M10 1l-9 9" /></svg>
            <svg width="13" height="11" viewBox="0 0 13 11" fill="none" stroke="#bbb" strokeWidth="1.600"><path d="M1 6l4 4 7-9" /></svg>
            <FxMark>fx</FxMark>
          </FxBox>
          <Input />
        </FormulaBar>

        <SheetArea>
          <Grid $cols={colWidths.map(w => `${w}px`).join(' ')}>{renderCells()}</Grid>
          <VScroll>
            <VArrow $mb={52}><UpMark $up /></VArrow>
            <VThumb />
            <VArrow $mt={176}><UpMark /></VArrow>
          </VScroll>
        </SheetArea>

        <TabBar>
          <TabNav><NavArrow $left $dim /><NavArrow /></TabNav>
          <TabLine />
          <SheetTab $w={59}>Chart1</SheetTab>
          <SheetTab $w={61} $on>Sheet1</SheetTab>
          <SheetTab $w={219} $ws={2.5}>Data pengamatan tinggi tanaman</SheetTab>
          <TabLine />
          <SheetTab $w={77}>Uji Lanjut</SheetTab>
          <TabLine />
          <SheetTab $w={129}>Data Jumlah Daun</SheetTab>
          <TabLine />
          <SheetTab $w={86}>Data Lua&nbsp;&nbsp;...</SheetTab>
          <AddSheet>
            <svg width="16" height="16" viewBox="0 0 16 16" fill="none" stroke="#666"><circle cx="8" cy="8" r="7" /><path d="M8 4v8M4 8h8" /></svg>
          </AddSheet>
          <Grip $w={31}>⋮</Grip>
          <HScroll>
            <HArrow><HMark $left /></HArrow>
            <HThumb />
            <HRest />
            <HArrow><HMark /></HArrow>
          </HScroll>
        </TabBar>

        <Status>
          <Ready>Ready</Ready>
          <ViewBtn $on>
            <svg width="13" height="13" viewBox="0 0 13 13" fill="none" stroke="#666"><path d="M.5.500h12v12H.5zM4.500.500v12M8.500.500v12M.5 4.500h12M.5 8.500h12" /></svg>
          </ViewBtn>
          <ViewBtn>
            <svg width="11" height="13" viewBox="0 0 11 13" fill="none" stroke="#666"><path d="M.5.500h10v12H.5zM3 3.500h5M3 6.500h5M3 9.500h5" /></svg>
          </ViewBtn>
          <ViewBtn>
            <svg width="13" height="13" viewBox="0 0 13 13" fill="none" stroke="#666"><path d="M.5.500h12v12H.5zM4.500.500v7h4v-7" /></svg>
          </ViewBtn>
          <Zoomer $w={20}>−</Zoomer>
          <Slider><SliderThumb /></Slider>
          <Zoomer $w={16}>+</Zoomer>
          <Zoomer $w={33} $fs={10.8} $pl={8}>100%</Zoomer>
        </Status>
      </Win>
    </Frame>
  );
}
